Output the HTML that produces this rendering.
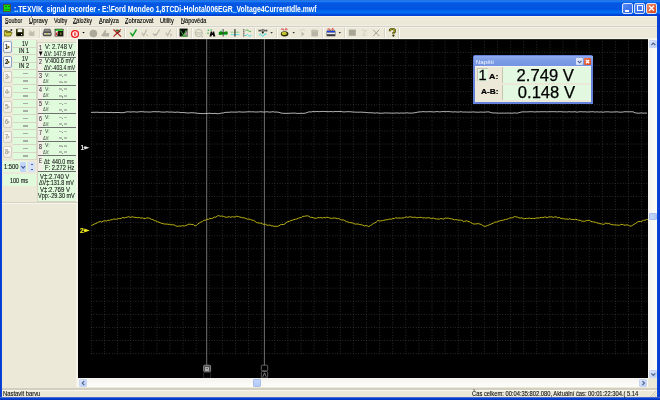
<!DOCTYPE html>
<html><head><meta charset="utf-8"><style>
*{margin:0;padding:0;box-sizing:border-box}
html,body{width:660px;height:400px;overflow:hidden;background:#ECE9D8;font-family:"Liberation Sans",sans-serif;position:relative}
body{will-change:transform}
.a{position:absolute}
.t{position:absolute;white-space:pre;line-height:1;color:#000}
</style></head><body>
<div class="a" style="left:0px;top:0px;width:660px;height:15.6px;background:linear-gradient(#2C6CD8 0,#1A80F6 1.4px,#0658E4 2.8px,#0054E0 9px,#006CF2 11.6px,#0070F4 12.8px,#0048DC 14.4px,#0040D0 15.6px);"></div>
<div class="a" style="left:2px;top:15.6px;width:655px;height:1px;background:#FBF6E4;"></div>
<div class="a" style="left:3.4px;top:4.4px;width:8px;height:8px;background:#12D812;border:1px solid #4A5A30"></div>
<div class="a" style="left:5.4px;top:6.0px;width:1.2px;height:1.2px;background:#0A7A0A;"></div><div class="a" style="left:8.4px;top:6.0px;width:1.2px;height:1.2px;background:#0A7A0A;"></div><div class="a" style="left:4.8px;top:8.6px;width:5.4px;height:1.4px;background:#0C9A0C;"></div>
<div class="t" style="left:14.00px;top:5px;font-size:8.6px;color:#fff;font-weight:bold;transform-origin:0 0;transform:scaleX(0.794);">:.TEXVIK  signal recorder - E:\Ford Mondeo 1,8TCDi-Holota\006EGR_Voltage4CurrentIdle.mwf</div>
<div class="a" style="left:622px;top:3px;width:11px;height:10.6px;background:linear-gradient(135deg,#5A8CF4,#2A64E4);border:1px solid #D8E4F8;border-radius:2px"></div>
<div class="a" style="left:625px;top:10px;width:4px;height:1.5px;background:#fff;"></div>
<div class="a" style="left:634px;top:3px;width:11px;height:10.6px;background:linear-gradient(135deg,#5A8CF4,#2A64E4);border:1px solid #D8E4F8;border-radius:2px"></div>
<div class="a" style="left:636.5px;top:5.4px;width:6px;height:5.6px;background:transparent;border:1px solid #fff;border-top-width:1.5px"></div>
<div class="a" style="left:646px;top:3px;width:10.8px;height:10.6px;background:linear-gradient(135deg,#F08A60,#D8441C);border:1px solid #D8E4F8;border-radius:2px"></div>
<svg class="a" style="left:646px;top:3px" width="11" height="11"><path d="M3 2.8L8 7.8M8 2.8L3 7.8" stroke="#fff" stroke-width="1.4"/></svg>
<div class="a" style="left:0px;top:14px;width:2px;height:386px;background:linear-gradient(90deg,#0838C8,#0A48E0);"></div><div class="a" style="left:657px;top:14px;width:3px;height:386px;background:linear-gradient(90deg,#0A48E0,#0838C8);"></div><div class="a" style="left:0px;top:397px;width:660px;height:1px;background:#4A6AD0;"></div><div class="a" style="left:0px;top:398px;width:660px;height:2px;background:linear-gradient(#0644D8,#0432B8);"></div>
<div class="a" style="left:2px;top:25px;width:655px;height:1px;background:#F0EEE4;"></div>
<div class="a" style="left:2px;top:26px;width:655px;height:1px;background:#D6D3C6;"></div>
<div class="a" style="left:2px;top:27px;width:655px;height:1px;background:#F2F0E8;"></div>
<div class="t" style="left:4.95px;top:18px;font-size:6.6px;color:#000;transform-origin:0 0;transform:scaleX(0.813);-webkit-text-stroke:0.12px #000;">Soubor</div>
<div class="a" style="left:4.95px;top:23.2px;width:3.4px;height:0.7px;background:#333;"></div>
<div class="t" style="left:28.70px;top:18px;font-size:6.6px;color:#000;transform-origin:0 0;transform:scaleX(0.899);-webkit-text-stroke:0.12px #000;">Úpravy</div>
<div class="a" style="left:28.7px;top:23.2px;width:3.4px;height:0.7px;background:#333;"></div>
<div class="t" style="left:53.70px;top:18px;font-size:6.6px;color:#000;transform-origin:0 0;transform:scaleX(0.824);-webkit-text-stroke:0.12px #000;">Volby</div>
<div class="t" style="left:73.30px;top:18px;font-size:6.6px;color:#000;transform-origin:0 0;transform:scaleX(0.831);-webkit-text-stroke:0.12px #000;">Záložky</div>
<div class="a" style="left:73.3px;top:23.2px;width:3.4px;height:0.7px;background:#333;"></div>
<div class="t" style="left:98.60px;top:18px;font-size:6.6px;color:#000;transform-origin:0 0;transform:scaleX(0.851);-webkit-text-stroke:0.12px #000;">Analýza</div>
<div class="a" style="left:98.6px;top:23.2px;width:3.4px;height:0.7px;background:#333;"></div>
<div class="t" style="left:125.00px;top:18px;font-size:6.6px;color:#000;transform-origin:0 0;transform:scaleX(0.863);-webkit-text-stroke:0.12px #000;">Zobrazovat</div>
<div class="a" style="left:125px;top:23.2px;width:3.4px;height:0.7px;background:#333;"></div>
<div class="t" style="left:160.00px;top:18px;font-size:6.6px;color:#000;transform-origin:0 0;transform:scaleX(0.849);-webkit-text-stroke:0.12px #000;">Utility</div>
<div class="t" style="left:180.50px;top:18px;font-size:6.6px;color:#000;transform-origin:0 0;transform:scaleX(0.846);-webkit-text-stroke:0.12px #000;">Nápověda</div>
<div class="a" style="left:180.5px;top:23.2px;width:3.4px;height:0.7px;background:#333;"></div>
<div class="a" style="left:2px;top:38px;width:655px;height:1px;background:#F6F4EC;"></div>
<svg class="a" style="left:0;top:0" width="400" height="40" viewBox="0 0 400 40">
<g stroke-linejoin="round">
<!-- folder -->
<path d="M4.6 30.6h2.6l0.8 0.9h2.8v4.2h-6.2z" fill="#8C8620" stroke="#484610" stroke-width="0.7"/>
<path d="M4.4 35.9L6.3 32.6H12.2L10.3 35.9Z" fill="#CFC83A" stroke="#5A5612" stroke-width="0.6"/>
<path d="M4.8 31.4L6.2 33.2L4.8 35Z" fill="#F2EC40"/>
<circle cx="11.3" cy="30" r="0.9" fill="#222"/>
<!-- floppy -->
<rect x="16" y="28.7" width="7.8" height="7.6" rx="0.8" fill="#343410"/>
<rect x="17.6" y="29.2" width="4.6" height="2.8" fill="#F4F4F0"/>
<rect x="17.4" y="33.2" width="5" height="2.6" fill="#000"/>
<rect x="21" y="34" width="1" height="1.2" fill="#EEE"/>
<!-- disabled -->
<path d="M28.4 33.5l2.5-2.5 1.5 1.2 2-2v5.8h-4.5z" fill="#C2BFB0"/>
<path d="M29 30.4l2 1.2" stroke="#C2BFB0" stroke-width="1"/>
<!-- sep -->
<rect x="39" y="28" width="0.8" height="10" fill="#D2CEBE"/><rect x="39.8" y="28" width="0.8" height="10" fill="#FFF"/>
<!-- printer -->
<path d="M44.5 29.2h5.5l1 2.5h-7.4z" fill="#8A8A8A" stroke="#3E3E3E" stroke-width="0.6"/>
<rect x="42.8" y="31.8" width="8.8" height="4.4" rx="1.5" fill="#505050"/>
<rect x="44" y="33.2" width="6.6" height="1.3" fill="#E8E8D8"/>
<rect x="46.4" y="33.3" width="1.5" height="1" fill="#C8C000"/>
<!-- chart icon -->
<rect x="54.7" y="28.7" width="8.8" height="7.8" rx="0.6" fill="#3C3C3C"/>
<rect x="55.5" y="29.4" width="7.3" height="1.6" fill="#38D838"/>
<path d="M55.5 31L58 31L57 36H55.5Z" fill="#EDEDED"/>
<path d="M55.7 33.5L57.5 31.5L56.8 35.6L55.6 35.6Z" fill="#E02020"/>
<rect x="58.2" y="31.2" width="4.6" height="4.6" fill="#101000"/>
<rect x="59.8" y="32.3" width="1.8" height="2.4" fill="#6A6A20"/>
<!-- sep -->
<rect x="66" y="28" width="0.8" height="10" fill="#D2CEBE"/><rect x="66.8" y="28" width="0.8" height="10" fill="#FFF"/>
<!-- stop red circle -->
<circle cx="75" cy="34" r="3.4" fill="#FFF" stroke="#EE1010" stroke-width="1.3"/>
<rect x="73.9" y="32.3" width="0.8" height="3.4" fill="#E81818"/><rect x="75.4" y="32.3" width="0.8" height="3.4" fill="#E81818"/>
<path d="M82.3 32.1h2.4l-1.2 1.3z" fill="#000"/>
<!-- gray circle -->
<circle cx="93.4" cy="33.5" r="3.8" fill="#ACA99A"/>
<!-- gray icon -->
<path d="M101 35.5l3-3.8 1-2 1.5 1.2-1 2h3.6v3.6h-6z" fill="#B4B1A2"/>
<!-- red X -->
<path d="M114 35.8l3.5-4 2-1.6 1.2 1-2 1.8z" fill="#303020"/>
<ellipse cx="117.2" cy="30.5" rx="1.8" ry="1.1" fill="#2A6A20"/>
<path d="M113.5 29.5L121 36.6M120.8 29.3L113.5 36.6" stroke="#B02020" stroke-width="1.1"/>
<!-- sep -->
<rect x="124.2" y="28" width="0.8" height="10" fill="#D2CEBE"/><rect x="125" y="28" width="0.8" height="10" fill="#FFF"/>
<!-- checks -->
<path d="M130.4 32.6l2.2 3.3 3.9-6.6" stroke="#10A020" stroke-width="1.5" fill="none"/>
<path d="M141.8 32.4l1.8 3.4 3-6.3" stroke="#B8B5A8" stroke-width="1.1" fill="none"/><path d="M146 34.5l2 1.2" stroke="#B8B5A8" stroke-width="0.9"/>
<path d="M153 33.4l1.6 2.2 1.2-1.8M155.8 35.6l3.8-6" stroke="#B8B5A8" stroke-width="1.1" fill="none"/>
<path d="M165.8 32.4l1.8 3.4 3-6.3" stroke="#B8B5A8" stroke-width="1.1" fill="none"/><path d="M170 33.8l2 1.2l-2 1.2" stroke="#B8B5A8" stroke-width="0.9" fill="none"/>
<!-- sep -->
<rect x="176.5" y="28" width="0.8" height="10" fill="#D2CEBE"/><rect x="177.3" y="28" width="0.8" height="10" fill="#FFF"/>
<!-- black square -->
<rect x="179.6" y="28.6" width="8" height="7.9" fill="#0A0A0A"/>
<path d="M187.6 30L182.6 35.8H187.6Z" fill="#A89898"/>
<path d="M180.5 30.5L183.5 35M183.6 35.5L186.2 30" stroke="#30C030" stroke-width="0.9" fill="none"/>
<rect x="181.5" y="35.6" width="6" height="0.9" fill="#40D040"/>
<!-- sep -->
<rect x="191.1" y="28" width="0.8" height="10" fill="#D2CEBE"/><rect x="191.9" y="28" width="0.8" height="10" fill="#FFF"/>
<!-- gray circle lines -->
<circle cx="198.8" cy="33" r="3.6" fill="none" stroke="#BEBBAE" stroke-width="1"/>
<path d="M195.5 32.6h6.6M196 34.2h5.6" stroke="#BEBBAE" stroke-width="0.8"/>
<rect x="201.8" y="36.2" width="1" height="1" fill="#9A978A"/>
<!-- binocular -->
<path d="M209.5 36.4l1.2-5h1.2l0.5 2 0.5-2h1.2l1.2 5h-2l-0.4-1.5h-1l-0.4 1.5z" fill="#0A0A0A"/>
<circle cx="208.3" cy="30.2" r="0.8" fill="#20B040"/><circle cx="211.2" cy="30" r="0.8" fill="#20B040"/><circle cx="208" cy="33.3" r="0.8" fill="#20B040"/>
<!-- green wave -->
<path d="M218.8 32.2l2-1.2l2.5 1.4l2.5-1.2l1.9 0.6v2.4l-2 0.8l-2.5-0.8l-2.5 0.8l-1.9-0.3z" fill="#0A8A0A"/>
<path d="M221 30.4h1.4M224.5 34.8h1.4" stroke="#40E0E0" stroke-width="0.8"/>
<rect x="222.7" y="29" width="0.8" height="7.6" fill="#222"/>
<!-- lines -->
<path d="M230.8 32.2h8.6" stroke="#40B040" stroke-width="0.8" stroke-dasharray="1 0.6"/>
<path d="M230.8 34.6h8.6" stroke="#50E0E8" stroke-width="0.9"/>
<rect x="234.4" y="29" width="1.1" height="7.6" fill="#2A2A2A"/>
<!-- wave2 -->
<path d="M243.8 29.2v7.4" stroke="#1A1A1A" stroke-width="0.9" stroke-dasharray="1.3 0.7"/>
<path d="M245.5 30.6q1.4-1.6 2.8 0t2.8 0.6" stroke="#40A840" stroke-width="0.9" fill="none"/>
<path d="M245 35.5h1.2q1.2-2 2.4 0t2.8-0.4" stroke="#30D8E8" stroke-width="0.9" fill="none"/>
<!-- sep -->
<rect x="254.2" y="28" width="0.8" height="10" fill="#D2CEBE"/><rect x="255" y="28" width="0.8" height="10" fill="#FFF"/>
<!-- HDH -->
<path d="M259 29.5v2.2M259 30.6h2M261 29.5v2.2M262.2 29.6v2h1.3q0.9-1-0-2zM264.8 29.5v2.2M264.8 30.6h2M266.8 29.5v2.2" stroke="#202020" stroke-width="0.7" fill="none"/>
<ellipse cx="262.8" cy="32.8" rx="1.1" ry="0.7" fill="#000"/>
<path d="M259.2 35.2q1.2-2.4 2.4 0t2.4 0t2.4-1" stroke="#20D8E8" stroke-width="1" fill="none"/>
<path d="M270.4 32.3h2.4l-1.2 1.3z" fill="#000"/>
<!-- sep -->
<rect x="276.1" y="28" width="0.8" height="10" fill="#D2CEBE"/><rect x="276.9" y="28" width="0.8" height="10" fill="#FFF"/>
<!-- yellow/red -->
<path d="M281.2 29.8l0.7-1.3l0.7 1.3M283.2 28.6v1.4h1.4M285.6 28.6v1.4h1.2q1-0.7 0-1.4z" stroke="#D03030" stroke-width="0.7" fill="none"/>
<ellipse cx="284.6" cy="33.8" rx="3.8" ry="2.6" fill="#2A2A08"/>
<ellipse cx="284.2" cy="33.4" rx="2.6" ry="1.7" fill="#C8C830"/>
<path d="M292.5 32.3h2.4l-1.2 1.3z" fill="#000"/>
<!-- gray play -->
<path d="M299.6 30.2h2.2M302.5 29.4h1.5M304.6 29.4q1.2 0.5 0 1.2" stroke="#C8C5B8" stroke-width="0.7" fill="none"/>
<path d="M301.5 31.6l3 2.3l-3 2.6z" fill="#BEBBAE"/>
<!-- gray trash -->
<rect x="311.4" y="31.2" width="6.6" height="5.2" fill="#B8B5A6"/>
<rect x="311" y="30.2" width="7.4" height="1" fill="#B8B5A6"/>
<path d="M312 29.5h1.5M314.6 29.2h1.4" stroke="#C8C5B8" stroke-width="0.7"/>
<!-- sep -->
<rect x="322.4" y="28" width="0.8" height="10" fill="#D2CEBE"/><rect x="323.2" y="28" width="0.8" height="10" fill="#FFF"/>
<!-- blue/red -->
<path d="M327.6 29.8l0.7-1.3l0.7 1.3M329.6 28.6v1.4h1.4M332 28.6v1.4h1.2q1-0.7 0-1.4z" stroke="#D03030" stroke-width="0.7" fill="none"/>
<rect x="326.6" y="30.6" width="8.8" height="5.6" rx="0.5" fill="#3A3A3A"/>
<rect x="327" y="31" width="8" height="1.4" fill="#1840E8"/>
<rect x="327" y="32.6" width="8" height="1.6" fill="#E8E8F0"/>
<path d="M338.6 32.3h2.4l-1.2 1.3z" fill="#000"/>
<!-- sep -->
<rect x="344.2" y="28" width="0.8" height="10" fill="#D2CEBE"/><rect x="345" y="28" width="0.8" height="10" fill="#FFF"/>
<rect x="348.8" y="29.6" width="7" height="6.2" fill="#A9A696"/>
<path d="M362.2 35.5l4.6-5.6M362 30.6q2-1.5 3 0.4M363.5 35.6q2 0.2 3-1.5" stroke="#CAC7BA" stroke-width="0.9" fill="none"/>
<path d="M373.2 29.8l6 6.2M379.2 29.8l-6 6.2" stroke="#A4A192" stroke-width="1"/>
<!-- sep -->
<rect x="384.2" y="28" width="0.8" height="10" fill="#D2CEBE"/><rect x="385" y="28" width="0.8" height="10" fill="#FFF"/>
<!-- ? -->
<path d="M389.8 31.2q0-2.3 2.6-2.3t2.6 2q0 1.3-1.6 2v1" stroke="#2A2A00" stroke-width="2" fill="none"/>
<path d="M389.8 31.2q0-2.3 2.6-2.3t2.6 2q0 1.3-1.6 2v1" stroke="#C8C020" stroke-width="1" fill="none"/>
<circle cx="393.4" cy="35.6" r="1.1" fill="#2A2A00"/>
<!-- end -->
<rect x="398.2" y="27.6" width="0.8" height="11" fill="#D2CEBE"/><rect x="399" y="27.6" width="0.8" height="11" fill="#FFF"/>
</g></svg>

<div class="a" style="left:76.2px;top:39px;width:1.8px;height:348px;background:#F6F4EA;"></div>
<div class="a" style="left:2.8px;top:40.5px;width:9.4px;height:12.3px;background:linear-gradient(#FFFFFF,#F0EEE4);border:1px solid #8AA6C8;border-radius:2px"></div>
<div class="t" style="left:5.00px;top:44px;font-size:6.8px;color:#000;font-weight:bold;transform-origin:0 0;transform:scaleX(0.689);">1</div>
<svg class="a" style="left:0;top:40px" width="14" height="14"><path d="M7.5 5.4L10 7.1L7.5 8.8Z" fill="#5A5A08"/></svg>
<div class="a" style="left:13px;top:39.5px;width:23.5px;height:15.2px;background:#D9D5C6;"></div>
<div class="a" style="left:13.4px;top:40.3px;width:22.5px;height:6.4px;background:#E0FBDC;"></div>
<div class="a" style="left:13.4px;top:47.6px;width:22.5px;height:6.0px;background:#E0FBDC;"></div>
<div class="t" style="left:21.75px;top:41px;font-size:6.8px;color:#1A1A1A;transform-origin:0 0;transform:scaleX(0.744);-webkit-text-stroke:0.15px #1A1A1A;">1V</div>
<div class="t" style="left:19.30px;top:48px;font-size:6.8px;color:#1A1A1A;transform-origin:0 0;transform:scaleX(0.801);-webkit-text-stroke:0.15px #1A1A1A;">IN 1</div>
<div class="a" style="left:2.8px;top:55.5px;width:9.4px;height:12.3px;background:linear-gradient(#FFFFFF,#F0EEE4);border:1px solid #8AA6C8;border-radius:2px"></div>
<div class="t" style="left:5.00px;top:59px;font-size:6.8px;color:#000;font-weight:bold;transform-origin:0 0;transform:scaleX(0.848);">2</div>
<svg class="a" style="left:0;top:55px" width="14" height="14"><path d="M7.5 5.4L10 7.1L7.5 8.8Z" fill="#5A5A08"/></svg>
<div class="a" style="left:13px;top:54.5px;width:23.5px;height:15.2px;background:#D9D5C6;"></div>
<div class="a" style="left:13.4px;top:55.3px;width:22.5px;height:6.4px;background:#E0FBDC;"></div>
<div class="a" style="left:13.4px;top:62.6px;width:22.5px;height:6.0px;background:#E0FBDC;"></div>
<div class="t" style="left:21.75px;top:56px;font-size:6.8px;color:#1A1A1A;transform-origin:0 0;transform:scaleX(0.744);-webkit-text-stroke:0.15px #1A1A1A;">1V</div>
<div class="t" style="left:19.30px;top:63px;font-size:6.8px;color:#1A1A1A;transform-origin:0 0;transform:scaleX(0.801);-webkit-text-stroke:0.15px #1A1A1A;">IN 2</div>
<div class="a" style="left:2.8px;top:70.5px;width:9.4px;height:12.3px;background:linear-gradient(#FAF9F4,#EEECE2);border:1px solid #D4D0C0;border-radius:2px"></div>
<div class="t" style="left:4.80px;top:73px;font-size:7px;color:#A29E8A;font-weight:bold;transform-origin:0 0;transform:scaleX(0.798);">3</div>
<svg class="a" style="left:0;top:70px" width="14" height="14"><path d="M7.6 5.4L10 7.1L7.6 8.8Z" fill="#BDB9A6"/></svg>
<div class="a" style="left:13px;top:69.5px;width:23.5px;height:15.2px;background:#D9D5C6;"></div>
<div class="a" style="left:13.4px;top:70.3px;width:22.5px;height:6.4px;background:#E0FBDC;"></div>
<div class="a" style="left:13.4px;top:77.6px;width:22.5px;height:6.0px;background:#E0FBDC;"></div>
<div class="a" style="left:23px;top:73.0px;width:4.6px;height:1.4px;background:#A8ACA6;"></div>
<div class="a" style="left:23px;top:80.2px;width:4.6px;height:1.4px;background:#A8ACA6;"></div>
<div class="a" style="left:2.8px;top:85.5px;width:9.4px;height:12.3px;background:linear-gradient(#FAF9F4,#EEECE2);border:1px solid #D4D0C0;border-radius:2px"></div>
<div class="t" style="left:4.80px;top:88px;font-size:7px;color:#A29E8A;font-weight:bold;transform-origin:0 0;transform:scaleX(0.798);">4</div>
<svg class="a" style="left:0;top:85px" width="14" height="14"><path d="M7.6 5.4L10 7.1L7.6 8.8Z" fill="#BDB9A6"/></svg>
<div class="a" style="left:13px;top:84.5px;width:23.5px;height:15.2px;background:#D9D5C6;"></div>
<div class="a" style="left:13.4px;top:85.3px;width:22.5px;height:6.4px;background:#E0FBDC;"></div>
<div class="a" style="left:13.4px;top:92.6px;width:22.5px;height:6.0px;background:#E0FBDC;"></div>
<div class="a" style="left:23px;top:88.0px;width:4.6px;height:1.4px;background:#A8ACA6;"></div>
<div class="a" style="left:23px;top:95.2px;width:4.6px;height:1.4px;background:#A8ACA6;"></div>
<div class="a" style="left:2.8px;top:100.5px;width:9.4px;height:12.3px;background:linear-gradient(#FAF9F4,#EEECE2);border:1px solid #D4D0C0;border-radius:2px"></div>
<div class="t" style="left:4.80px;top:103px;font-size:7px;color:#A29E8A;font-weight:bold;transform-origin:0 0;transform:scaleX(0.798);">5</div>
<svg class="a" style="left:0;top:100px" width="14" height="14"><path d="M7.6 5.4L10 7.1L7.6 8.8Z" fill="#BDB9A6"/></svg>
<div class="a" style="left:13px;top:99.5px;width:23.5px;height:15.2px;background:#D9D5C6;"></div>
<div class="a" style="left:13.4px;top:100.3px;width:22.5px;height:6.4px;background:#E0FBDC;"></div>
<div class="a" style="left:13.4px;top:107.6px;width:22.5px;height:6.0px;background:#E0FBDC;"></div>
<div class="a" style="left:23px;top:103.0px;width:4.6px;height:1.4px;background:#A8ACA6;"></div>
<div class="a" style="left:23px;top:110.2px;width:4.6px;height:1.4px;background:#A8ACA6;"></div>
<div class="a" style="left:2.8px;top:115.5px;width:9.4px;height:12.3px;background:linear-gradient(#FAF9F4,#EEECE2);border:1px solid #D4D0C0;border-radius:2px"></div>
<div class="t" style="left:4.80px;top:118px;font-size:7px;color:#A29E8A;font-weight:bold;transform-origin:0 0;transform:scaleX(0.798);">6</div>
<svg class="a" style="left:0;top:115px" width="14" height="14"><path d="M7.6 5.4L10 7.1L7.6 8.8Z" fill="#BDB9A6"/></svg>
<div class="a" style="left:13px;top:114.5px;width:23.5px;height:15.2px;background:#D9D5C6;"></div>
<div class="a" style="left:13.4px;top:115.3px;width:22.5px;height:6.4px;background:#E0FBDC;"></div>
<div class="a" style="left:13.4px;top:122.6px;width:22.5px;height:6.0px;background:#E0FBDC;"></div>
<div class="a" style="left:23px;top:118.0px;width:4.6px;height:1.4px;background:#A8ACA6;"></div>
<div class="a" style="left:23px;top:125.2px;width:4.6px;height:1.4px;background:#A8ACA6;"></div>
<div class="a" style="left:2.8px;top:130.5px;width:9.4px;height:12.3px;background:linear-gradient(#FAF9F4,#EEECE2);border:1px solid #D4D0C0;border-radius:2px"></div>
<div class="t" style="left:4.80px;top:133px;font-size:7px;color:#A29E8A;font-weight:bold;transform-origin:0 0;transform:scaleX(0.798);">7</div>
<svg class="a" style="left:0;top:130px" width="14" height="14"><path d="M7.6 5.4L10 7.1L7.6 8.8Z" fill="#BDB9A6"/></svg>
<div class="a" style="left:13px;top:129.5px;width:23.5px;height:15.2px;background:#D9D5C6;"></div>
<div class="a" style="left:13.4px;top:130.3px;width:22.5px;height:6.4px;background:#E0FBDC;"></div>
<div class="a" style="left:13.4px;top:137.6px;width:22.5px;height:6.0px;background:#E0FBDC;"></div>
<div class="a" style="left:23px;top:133.0px;width:4.6px;height:1.4px;background:#A8ACA6;"></div>
<div class="a" style="left:23px;top:140.2px;width:4.6px;height:1.4px;background:#A8ACA6;"></div>
<div class="a" style="left:2.8px;top:145.5px;width:9.4px;height:12.3px;background:linear-gradient(#FAF9F4,#EEECE2);border:1px solid #D4D0C0;border-radius:2px"></div>
<div class="t" style="left:4.80px;top:148px;font-size:7px;color:#A29E8A;font-weight:bold;transform-origin:0 0;transform:scaleX(0.798);">8</div>
<svg class="a" style="left:0;top:145px" width="14" height="14"><path d="M7.6 5.4L10 7.1L7.6 8.8Z" fill="#BDB9A6"/></svg>
<div class="a" style="left:13px;top:144.5px;width:23.5px;height:15.2px;background:#D9D5C6;"></div>
<div class="a" style="left:13.4px;top:145.3px;width:22.5px;height:6.4px;background:#E0FBDC;"></div>
<div class="a" style="left:13.4px;top:152.6px;width:22.5px;height:6.0px;background:#E0FBDC;"></div>
<div class="a" style="left:23px;top:148.0px;width:4.6px;height:1.4px;background:#A8ACA6;"></div>
<div class="a" style="left:23px;top:155.2px;width:4.6px;height:1.4px;background:#A8ACA6;"></div>
<div class="a" style="left:2.7px;top:161.2px;width:24px;height:11px;background:#E0FBDC;"></div>
<div class="t" style="left:4.20px;top:163px;font-size:7px;color:#111;transform-origin:0 0;transform:scaleX(0.827);-webkit-text-stroke:0.12px #111;">1:500</div>
<div class="a" style="left:20px;top:161.8px;width:6.4px;height:10px;background:#C2D4F8;border-radius:1px"></div>
<svg class="a" style="left:20px;top:161.8px" width="7" height="10"><path d="M1.4 4.2L3.2 6.2L5 4.2" stroke="#4A5E9A" stroke-width="1.2" fill="none"/></svg>
<div class="a" style="left:28px;top:161.5px;width:7px;height:5px;background:#D6E2F8;border-radius:1px"></div><div class="a" style="left:28px;top:167px;width:7px;height:5px;background:#D6E2F8;border-radius:1px"></div>
<div class="a" style="left:30.5px;top:163.5px;width:2px;height:1px;background:#4A5E9A;"></div><div class="a" style="left:30.5px;top:169px;width:2px;height:1px;background:#4A5E9A;"></div>
<div class="a" style="left:2.7px;top:174px;width:33.3px;height:12px;background:#E0FBDC;"></div>
<div class="t" style="left:9.70px;top:177px;font-size:7px;color:#111;transform-origin:0 0;transform:scaleX(0.784);-webkit-text-stroke:0.12px #111;">100 ms</div>
<div class="a" style="left:2px;top:201.6px;width:76px;height:1px;background:#D6D2C2;"></div><div class="a" style="left:2px;top:202.6px;width:76px;height:1px;background:#F6F5EE;"></div>
<div class="a" style="left:37.2px;top:41.6px;width:39px;height:160.2px;background:#F2F0E6;border:1px solid #D8D4C6"></div>
<div class="a" style="left:42.8px;top:42.7px;width:33.2px;height:13.9px;background:#E0FBDC;"></div>
<div class="t" style="left:39.40px;top:44px;font-size:7px;color:#2A2A2A;transform-origin:0 0;transform:scaleX(0.746);-webkit-text-stroke:0.1px #2A2A2A;">1</div>
<svg class="a" style="left:0;top:0" width="50" height="60"><path d="M38.9 51.4H42.5L40.7 55.9Z" fill="#000"/></svg>
<div class="t" style="left:44.80px;top:44px;font-size:6.8px;color:#111;transform-origin:0 0;transform:scaleX(0.876);-webkit-text-stroke:0.08px #111;">V: 2.748 V</div>
<div class="t" style="left:43.60px;top:51px;font-size:6.8px;color:#111;transform-origin:0 0;transform:scaleX(0.748);-webkit-text-stroke:0.08px #111;">ΔV: 147.9 mV</div>
<div class="a" style="left:42.8px;top:56.800000000000004px;width:33.2px;height:13.9px;background:#E0FBDC;"></div>
<div class="t" style="left:39.40px;top:58px;font-size:7px;color:#2A2A2A;transform-origin:0 0;transform:scaleX(0.746);-webkit-text-stroke:0.1px #2A2A2A;">2</div>
<div class="t" style="left:44.80px;top:58px;font-size:6.8px;color:#111;transform-origin:0 0;transform:scaleX(0.816);-webkit-text-stroke:0.08px #111;">V:400.6 mV</div>
<div class="t" style="left:43.60px;top:65px;font-size:6.8px;color:#111;transform-origin:0 0;transform:scaleX(0.741);-webkit-text-stroke:0.08px #111;">ΔV:-403.4 mV</div>
<div class="a" style="left:42.8px;top:70.9px;width:33.2px;height:13.9px;background:#E0FBDC;"></div>
<div class="t" style="left:39.40px;top:72px;font-size:7px;color:#2A2A2A;transform-origin:0 0;transform:scaleX(0.746);-webkit-text-stroke:0.1px #2A2A2A;">3</div>
<div class="t" style="left:44.80px;top:72px;font-size:6.0px;color:#333;transform-origin:0 0;transform:scaleX(0.842);">V:</div>
<div class="t" style="left:43.40px;top:78px;font-size:6.0px;color:#333;transform-origin:0 0;transform:scaleX(0.656);">ΔV:</div>
<div class="a" style="left:58.9px;top:74.30000000000001px;width:3.1px;height:1.8px;background:#B4BCB2;"></div><div class="a" style="left:63.6px;top:74.30000000000001px;width:3.2px;height:1.8px;background:#B4BCB2;"></div><div class="a" style="left:62.4px;top:75.70000000000002px;width:0.7px;height:1.2px;background:#8A908A;"></div>
<div class="a" style="left:58.9px;top:80.9px;width:3.1px;height:1.8px;background:#B4BCB2;"></div><div class="a" style="left:63.6px;top:80.9px;width:3.2px;height:1.8px;background:#B4BCB2;"></div><div class="a" style="left:62.4px;top:82.30000000000001px;width:0.7px;height:1.2px;background:#8A908A;"></div>
<div class="a" style="left:42.8px;top:85.0px;width:33.2px;height:13.9px;background:#E0FBDC;"></div>
<div class="t" style="left:39.40px;top:86px;font-size:7px;color:#2A2A2A;transform-origin:0 0;transform:scaleX(0.746);-webkit-text-stroke:0.1px #2A2A2A;">4</div>
<div class="t" style="left:44.80px;top:86px;font-size:6.0px;color:#333;transform-origin:0 0;transform:scaleX(0.842);">V:</div>
<div class="t" style="left:43.40px;top:92px;font-size:6.0px;color:#333;transform-origin:0 0;transform:scaleX(0.656);">ΔV:</div>
<div class="a" style="left:58.9px;top:88.4px;width:3.1px;height:1.8px;background:#B4BCB2;"></div><div class="a" style="left:63.6px;top:88.4px;width:3.2px;height:1.8px;background:#B4BCB2;"></div><div class="a" style="left:62.4px;top:89.80000000000001px;width:0.7px;height:1.2px;background:#8A908A;"></div>
<div class="a" style="left:58.9px;top:95.0px;width:3.1px;height:1.8px;background:#B4BCB2;"></div><div class="a" style="left:63.6px;top:95.0px;width:3.2px;height:1.8px;background:#B4BCB2;"></div><div class="a" style="left:62.4px;top:96.4px;width:0.7px;height:1.2px;background:#8A908A;"></div>
<div class="a" style="left:42.8px;top:99.1px;width:33.2px;height:13.9px;background:#E0FBDC;"></div>
<div class="t" style="left:39.40px;top:100px;font-size:7px;color:#2A2A2A;transform-origin:0 0;transform:scaleX(0.746);-webkit-text-stroke:0.1px #2A2A2A;">5</div>
<div class="t" style="left:44.80px;top:100px;font-size:6.0px;color:#333;transform-origin:0 0;transform:scaleX(0.842);">V:</div>
<div class="t" style="left:43.40px;top:106px;font-size:6.0px;color:#333;transform-origin:0 0;transform:scaleX(0.656);">ΔV:</div>
<div class="a" style="left:58.9px;top:102.5px;width:3.1px;height:1.8px;background:#B4BCB2;"></div><div class="a" style="left:63.6px;top:102.5px;width:3.2px;height:1.8px;background:#B4BCB2;"></div><div class="a" style="left:62.4px;top:103.9px;width:0.7px;height:1.2px;background:#8A908A;"></div>
<div class="a" style="left:58.9px;top:109.1px;width:3.1px;height:1.8px;background:#B4BCB2;"></div><div class="a" style="left:63.6px;top:109.1px;width:3.2px;height:1.8px;background:#B4BCB2;"></div><div class="a" style="left:62.4px;top:110.5px;width:0.7px;height:1.2px;background:#8A908A;"></div>
<div class="a" style="left:42.8px;top:113.2px;width:33.2px;height:13.9px;background:#E0FBDC;"></div>
<div class="t" style="left:39.40px;top:115px;font-size:7px;color:#2A2A2A;transform-origin:0 0;transform:scaleX(0.746);-webkit-text-stroke:0.1px #2A2A2A;">6</div>
<div class="t" style="left:44.80px;top:114px;font-size:6.0px;color:#333;transform-origin:0 0;transform:scaleX(0.842);">V:</div>
<div class="t" style="left:43.40px;top:121px;font-size:6.0px;color:#333;transform-origin:0 0;transform:scaleX(0.656);">ΔV:</div>
<div class="a" style="left:58.9px;top:116.60000000000001px;width:3.1px;height:1.8px;background:#B4BCB2;"></div><div class="a" style="left:63.6px;top:116.60000000000001px;width:3.2px;height:1.8px;background:#B4BCB2;"></div><div class="a" style="left:62.4px;top:118.00000000000001px;width:0.7px;height:1.2px;background:#8A908A;"></div>
<div class="a" style="left:58.9px;top:123.2px;width:3.1px;height:1.8px;background:#B4BCB2;"></div><div class="a" style="left:63.6px;top:123.2px;width:3.2px;height:1.8px;background:#B4BCB2;"></div><div class="a" style="left:62.4px;top:124.60000000000001px;width:0.7px;height:1.2px;background:#8A908A;"></div>
<div class="a" style="left:42.8px;top:127.3px;width:33.2px;height:13.9px;background:#E0FBDC;"></div>
<div class="t" style="left:39.40px;top:129px;font-size:7px;color:#2A2A2A;transform-origin:0 0;transform:scaleX(0.746);-webkit-text-stroke:0.1px #2A2A2A;">7</div>
<div class="t" style="left:44.80px;top:128px;font-size:6.0px;color:#333;transform-origin:0 0;transform:scaleX(0.842);">V:</div>
<div class="t" style="left:43.40px;top:135px;font-size:6.0px;color:#333;transform-origin:0 0;transform:scaleX(0.656);">ΔV:</div>
<div class="a" style="left:58.9px;top:130.7px;width:3.1px;height:1.8px;background:#B4BCB2;"></div><div class="a" style="left:63.6px;top:130.7px;width:3.2px;height:1.8px;background:#B4BCB2;"></div><div class="a" style="left:62.4px;top:132.1px;width:0.7px;height:1.2px;background:#8A908A;"></div>
<div class="a" style="left:58.9px;top:137.3px;width:3.1px;height:1.8px;background:#B4BCB2;"></div><div class="a" style="left:63.6px;top:137.3px;width:3.2px;height:1.8px;background:#B4BCB2;"></div><div class="a" style="left:62.4px;top:138.70000000000002px;width:0.7px;height:1.2px;background:#8A908A;"></div>
<div class="a" style="left:42.8px;top:141.4px;width:33.2px;height:13.9px;background:#E0FBDC;"></div>
<div class="t" style="left:39.40px;top:143px;font-size:7px;color:#2A2A2A;transform-origin:0 0;transform:scaleX(0.746);-webkit-text-stroke:0.1px #2A2A2A;">8</div>
<div class="t" style="left:44.80px;top:142px;font-size:6.0px;color:#333;transform-origin:0 0;transform:scaleX(0.842);">V:</div>
<div class="t" style="left:43.40px;top:149px;font-size:6.0px;color:#333;transform-origin:0 0;transform:scaleX(0.656);">ΔV:</div>
<div class="a" style="left:58.9px;top:144.8px;width:3.1px;height:1.8px;background:#B4BCB2;"></div><div class="a" style="left:63.6px;top:144.8px;width:3.2px;height:1.8px;background:#B4BCB2;"></div><div class="a" style="left:62.4px;top:146.20000000000002px;width:0.7px;height:1.2px;background:#8A908A;"></div>
<div class="a" style="left:58.9px;top:151.4px;width:3.1px;height:1.8px;background:#B4BCB2;"></div><div class="a" style="left:63.6px;top:151.4px;width:3.2px;height:1.8px;background:#B4BCB2;"></div><div class="a" style="left:62.4px;top:152.8px;width:0.7px;height:1.2px;background:#8A908A;"></div>
<div class="a" style="left:42.8px;top:155.5px;width:33.2px;height:15.3px;background:#E0FBDC;"></div>
<div class="t" style="left:39.20px;top:157px;font-size:7px;color:#222;transform-origin:0 0;transform:scaleX(0.623);-webkit-text-stroke:0.12px #222;">E</div>
<div class="t" style="left:43.80px;top:159px;font-size:6.8px;color:#111;transform-origin:0 0;transform:scaleX(0.783);-webkit-text-stroke:0.1px #111;">Δt: 440.0 ms</div>
<div class="t" style="left:45.00px;top:165px;font-size:6.8px;color:#111;transform-origin:0 0;transform:scaleX(0.836);-webkit-text-stroke:0.1px #111;">F: 2.272 Hz</div>
<div class="a" style="left:38px;top:171.1px;width:37.6px;height:1px;background:#6E6E6E;"></div>
<div class="a" style="left:38px;top:56.7px;width:37.6px;height:1px;background:#6E6E6E;"></div>
<div class="a" style="left:38px;top:70.80000000000001px;width:37.6px;height:1px;background:#6E6E6E;"></div>
<div class="a" style="left:38px;top:84.9px;width:37.6px;height:1px;background:#6E6E6E;"></div>
<div class="a" style="left:38px;top:99.0px;width:37.6px;height:1px;background:#6E6E6E;"></div>
<div class="a" style="left:38px;top:113.1px;width:37.6px;height:1px;background:#6E6E6E;"></div>
<div class="a" style="left:38px;top:127.2px;width:37.6px;height:1px;background:#6E6E6E;"></div>
<div class="a" style="left:38px;top:141.3px;width:37.6px;height:1px;background:#6E6E6E;"></div>
<div class="a" style="left:38px;top:155.4px;width:37.6px;height:1px;background:#6E6E6E;"></div>
<div class="a" style="left:38px;top:172.1px;width:38px;height:29.1px;background:#E0FBDC;"></div>
<div class="t" style="left:39.70px;top:174px;font-size:6.8px;color:#111;transform-origin:0 0;transform:scaleX(0.870);-webkit-text-stroke:0.1px #111;">V‡:2.740 V</div>
<div class="t" style="left:38.70px;top:180px;font-size:6.8px;color:#111;transform-origin:0 0;transform:scaleX(0.793);-webkit-text-stroke:0.1px #111;">ΔV‡:131.8 mV</div>
<div class="t" style="left:39.70px;top:187px;font-size:6.8px;color:#111;transform-origin:0 0;transform:scaleX(0.891);-webkit-text-stroke:0.1px #111;">V‡:2.769 V</div>
<div class="t" style="left:38.20px;top:193px;font-size:6.8px;color:#111;transform-origin:0 0;transform:scaleX(0.811);-webkit-text-stroke:0.1px #111;">Vpp:-29.30 mV</div>
<div class="a" style="left:78px;top:39px;width:570px;height:339px;background:#000;"></div>
<div class="a" style="left:78px;top:39px;width:570px;height:1px;background:#2A2A28;"></div>
<svg class="a" style="left:78px;top:39px" width="570" height="339" viewBox="0 0 570 339">
<path d="M13.40 2.50V315.20M26.50 2.50V315.20M39.60 2.50V315.20M52.70 2.50V315.20M65.80 2.50V315.20M78.90 2.50V315.20M92.00 2.50V315.20M105.10 2.50V315.20M118.20 2.50V315.20M131.30 2.50V315.20M144.40 2.50V315.20M157.50 2.50V315.20M170.60 2.50V315.20M183.70 2.50V315.20M196.80 2.50V315.20M209.90 2.50V315.20M223.00 2.50V315.20M236.10 2.50V315.20M249.20 2.50V315.20M262.30 2.50V315.20M275.40 2.50V315.20M288.50 2.50V315.20M301.60 2.50V315.20M314.70 2.50V315.20M327.80 2.50V315.20M340.90 2.50V315.20M354.00 2.50V315.20M367.10 2.50V315.20M380.20 2.50V315.20M393.30 2.50V315.20M406.40 2.50V315.20M419.50 2.50V315.20M432.60 2.50V315.20M445.70 2.50V315.20M458.80 2.50V315.20M471.90 2.50V315.20M485.00 2.50V315.20M498.10 2.50V315.20M511.20 2.50V315.20M524.30 2.50V315.20M537.40 2.50V315.20M550.50 2.50V315.20M563.60 2.50V315.20" stroke="#4a4a4a" stroke-width="0.75" stroke-dasharray="0.75 1.87" fill="none"/>
<path d="M13.00 13.35H570.00M13.00 26.45H570.00M13.00 39.55H570.00M13.00 52.65H570.00M13.00 65.75H570.00M13.00 78.85H570.00M13.00 91.95H570.00M13.00 105.05H570.00M13.00 118.15H570.00M13.00 131.25H570.00M13.00 144.35H570.00M13.00 157.45H570.00M13.00 170.55H570.00M13.00 183.65H570.00M13.00 196.75H570.00M13.00 209.85H570.00M13.00 222.95H570.00M13.00 236.05H570.00M13.00 249.15H570.00M13.00 262.25H570.00M13.00 275.35H570.00M13.00 288.45H570.00M13.00 301.55H570.00M13.00 314.65H570.00" stroke="#4a4a4a" stroke-width="0.75" stroke-dasharray="0.75 1.87" fill="none"/>
<line x1="128.7" y1="0" x2="128.7" y2="326" stroke="#8C8C8C" stroke-width="0.8"/>
<line x1="186.4" y1="0" x2="186.4" y2="326" stroke="#8C8C8C" stroke-width="0.8"/>
<rect x="125.6" y="326.2" width="7" height="6.6" rx="1" fill="#505050" stroke="#A8A8A8" stroke-width="0.7"/>
<text x="127.0" y="332.0" font-size="6" font-weight="bold" fill="#D8D8D8" font-family="Liberation Sans">B</text>
<rect x="125.6" y="333.2" width="7" height="6" rx="1" fill="none" stroke="#3A3A3A" stroke-width="0.7"/>
<rect x="183.3" y="326.2" width="6.4" height="5.6" rx="1" fill="none" stroke="#8A8A8A" stroke-width="0.7"/>
<rect x="183.3" y="332.4" width="6.4" height="6.6" rx="1.5" fill="none" stroke="#8A8A8A" stroke-width="0.7"/>
<path d="M184.8 337.8L186.5 333.8L188.2 337.8" stroke="#A0A0A0" stroke-width="0.8" fill="none"/>
<text x="2.4" y="111.4" font-size="6.4" font-weight="bold" fill="#E8E8E8" font-family="Liberation Sans">1</text>
<path d="M6.4 106.9L11.4 108.7L6.4 110.5Z" fill="#E8E8E8"/><rect x="5.6" y="108.2" width="2" height="1" fill="#E8E8E8"/>
<text x="1.9" y="194.3" font-size="6.6" font-weight="bold" fill="#F0E820" stroke="#F0E820" stroke-width="0.2" font-family="Liberation Sans">2</text>
<path d="M6.2 189.6L11.8 191.5L6.2 193.4Z" fill="#F0E820"/><rect x="5.6" y="191" width="2" height="1" fill="#F0E820"/>
<polyline points="13.0,73.4 15.0,73.3 17.0,73.3 19.0,73.2 21.0,73.4 23.0,73.4 25.0,73.3 27.0,73.4 29.0,73.4 31.0,73.6 33.0,73.3 35.0,73.7 37.0,73.5 39.0,73.5 41.0,73.5 43.0,73.7 45.0,73.7 47.0,73.3 49.0,72.8 51.0,72.9 53.0,73.0 55.0,72.8 57.0,72.9 59.0,73.1 61.0,72.8 63.0,72.7 65.0,72.7 67.0,73.0 69.0,72.9 71.0,73.1 73.0,73.0 75.0,72.7 77.0,72.7 79.0,72.8 81.0,72.7 83.0,73.0 85.0,73.1 87.0,73.1 89.0,72.8 91.0,73.1 93.0,73.0 95.0,73.1 97.0,73.4 99.0,73.1 101.0,73.2 103.0,73.7 105.0,73.5 107.0,73.7 109.0,73.9 111.0,74.0 113.0,73.7 115.0,73.8 117.0,73.9 119.0,74.3 121.0,74.4 123.0,74.5 125.0,74.7 127.0,74.4 129.0,74.5 131.0,74.3 133.0,74.4 135.0,74.6 137.0,74.3 139.0,74.7 141.0,74.7 143.0,74.1 145.0,74.1 147.0,73.4 149.0,73.3 151.0,73.3 153.0,73.0 155.0,73.1 157.0,73.1 159.0,73.1 161.0,72.8 163.0,73.0 165.0,73.1 167.0,73.0 169.0,72.9 171.0,72.7 173.0,72.9 175.0,72.8 177.0,73.0 179.0,73.0 181.0,72.9 183.0,72.7 185.0,73.0 187.0,73.0 189.0,72.7 191.0,73.1 193.0,73.0 195.0,72.7 197.0,73.1 199.0,73.0 201.0,73.4 203.0,74.0 205.0,74.3 207.0,74.3 209.0,74.4 211.0,74.3 213.0,74.2 215.0,74.1 217.0,74.1 219.0,74.4 221.0,74.4 223.0,74.3 225.0,74.4 227.0,74.2 229.0,73.6 231.0,72.8 233.0,73.0 235.0,72.5 237.0,72.7 239.0,72.5 241.0,72.7 243.0,72.5 245.0,72.4 247.0,72.5 249.0,72.6 251.0,72.7 253.0,72.5 255.0,72.8 257.0,72.5 259.0,72.6 261.0,72.5 263.0,72.5 265.0,72.9 267.0,72.9 269.0,72.7 271.0,72.7 273.0,72.8 275.0,73.0 277.0,73.1 279.0,73.2 281.0,73.2 283.0,73.1 285.0,73.3 287.0,73.3 289.0,73.6 291.0,73.8 293.0,73.7 295.0,73.9 297.0,74.1 299.0,73.8 301.0,74.2 303.0,74.2 305.0,74.2 307.0,73.9 309.0,74.0 311.0,74.0 313.0,74.1 315.0,74.2 317.0,74.1 319.0,73.9 321.0,74.2 323.0,74.0 325.0,74.1 327.0,74.1 329.0,73.8 331.0,74.1 333.0,74.1 335.0,74.0 337.0,73.7 339.0,73.3 341.0,72.9 343.0,72.9 345.0,72.6 347.0,72.8 349.0,72.8 351.0,72.7 353.0,72.7 355.0,72.9 357.0,72.9 359.0,72.5 361.0,72.9 363.0,72.8 365.0,72.5 367.0,72.7 369.0,72.6 371.0,72.6 373.0,72.8 375.0,73.0 377.0,72.8 379.0,73.0 381.0,73.0 383.0,72.7 385.0,73.1 387.0,73.0 389.0,73.1 391.0,73.1 393.0,73.1 395.0,72.9 397.0,73.1 399.0,73.2 401.0,73.2 403.0,73.0 405.0,73.2 407.0,73.1 409.0,72.9 411.0,72.9 413.0,73.6 415.0,74.0 417.0,73.9 419.0,74.1 421.0,74.2 423.0,74.1 425.0,74.1 427.0,74.2 429.0,74.0 431.0,74.1 433.0,74.2 435.0,74.1 437.0,73.9 439.0,74.2 441.0,73.7 443.0,73.1 445.0,72.8 447.0,72.9 449.0,72.9 451.0,72.8 453.0,72.7 455.0,72.8 457.0,73.0 459.0,72.7 461.0,72.9 463.0,72.7 465.0,72.8 467.0,72.7 469.0,72.9 471.0,72.7 473.0,72.7 475.0,72.7 477.0,72.7 479.0,72.9 481.0,72.7 483.0,72.7 485.0,72.9 487.0,72.9 489.0,73.0 491.0,72.7 493.0,72.9 495.0,72.9 497.0,72.7 499.0,73.2 501.0,72.8 503.0,72.7 505.0,72.9 507.0,72.8 509.0,73.0 511.0,72.9 513.0,72.8 515.0,72.7 517.0,73.1 519.0,72.8 521.0,73.1 523.0,72.9 525.0,73.2 527.0,72.9 529.0,72.8 531.0,72.9 533.0,73.1 535.0,73.0 537.0,72.9 539.0,72.8 541.0,73.1 543.0,73.2 545.0,73.0 547.0,72.7 549.0,72.8 551.0,72.8 553.0,72.8 555.0,72.8 557.0,73.8 559.0,74.1 561.0,74.2 563.0,73.9 565.0,74.2 567.0,74.0 569.0,74.2" stroke="#B8B8B8" stroke-width="0.95" fill="none"/>
<polyline points="13.3,186.4 14.8,186.0 16.3,185.0 17.8,184.5 19.3,183.8 20.8,182.9 22.3,182.5 23.8,183.0 25.3,182.0 26.8,181.7 28.3,182.1 29.8,181.3 31.3,181.4 32.8,180.8 34.3,180.7 35.8,180.0 37.3,180.2 38.8,180.2 40.3,179.6 41.8,179.6 43.3,179.3 44.8,178.5 46.3,178.9 47.8,178.5 49.3,178.1 50.8,177.7 52.3,178.4 53.8,177.9 55.3,178.0 56.8,178.4 58.3,178.4 59.8,178.8 61.3,178.5 62.8,179.1 64.3,178.8 65.8,179.5 67.3,179.5 68.8,178.9 70.3,179.0 71.8,179.2 73.3,180.3 74.8,180.5 76.3,181.5 77.8,181.9 79.3,182.7 80.8,183.2 82.3,183.7 83.8,184.5 85.3,184.7 86.8,185.1 88.3,185.0 89.8,185.3 91.3,185.3 92.8,185.7 94.3,185.8 95.8,185.7 97.3,186.7 98.8,187.2 100.3,187.3 101.8,187.0 103.3,187.1 104.8,186.6 106.3,187.1 107.8,186.5 109.3,185.9 110.8,185.2 112.3,185.3 113.8,185.5 115.3,185.5 116.8,187.0 118.3,186.5 119.8,185.1 121.3,184.0 122.8,183.2 124.3,182.5 125.8,181.2 127.3,181.3 128.8,180.2 130.3,180.4 131.8,179.5 133.3,179.6 134.8,179.2 136.3,178.2 137.8,178.2 139.3,177.0 140.8,176.6 142.3,177.3 143.8,177.0 145.3,177.4 146.8,177.9 148.3,178.3 149.8,178.0 151.3,177.7 152.8,178.4 154.3,177.6 155.8,178.1 157.3,177.8 158.8,177.2 160.3,177.6 161.8,178.0 163.3,178.4 164.8,178.7 166.3,178.9 167.8,179.4 169.3,180.1 170.8,180.1 172.3,180.4 173.8,181.1 175.3,181.3 176.8,182.1 178.3,183.5 179.8,183.7 181.3,184.2 182.8,184.0 184.3,184.8 185.8,185.4 187.3,185.2 188.8,186.1 190.3,186.3 191.8,186.0 193.3,186.8 194.8,186.9 196.3,187.4 197.8,187.3 199.3,187.3 200.8,186.9 202.3,185.8 203.8,185.4 205.3,185.6 206.8,185.1 208.3,183.4 209.8,182.7 211.3,182.3 212.8,181.6 214.3,181.2 215.8,180.7 217.3,180.2 218.8,180.0 220.3,179.2 221.8,178.7 223.3,178.6 224.8,177.3 226.3,177.3 227.8,177.0 229.3,176.8 230.8,177.2 232.3,178.4 233.8,178.3 235.3,178.8 236.8,179.2 238.3,179.3 239.8,178.6 241.3,178.7 242.8,178.6 244.3,179.0 245.8,178.5 247.3,178.8 248.8,178.2 250.3,178.5 251.8,179.0 253.3,179.4 254.8,179.1 256.3,179.1 257.8,179.1 259.3,179.7 260.8,179.5 262.3,180.5 263.8,181.0 265.3,180.9 266.8,181.5 268.3,182.5 269.8,182.9 271.3,183.6 272.8,183.6 274.3,183.9 275.8,184.5 277.3,185.2 278.8,184.9 280.3,185.2 281.8,185.5 283.3,185.8 284.8,186.1 286.3,187.0 287.8,186.6 289.3,186.8 290.8,187.6 292.3,186.6 293.8,185.8 295.3,184.4 296.8,184.0 298.3,183.0 299.8,181.6 301.3,181.9 302.8,181.9 304.3,181.6 305.8,181.3 307.3,180.9 308.8,180.8 310.3,180.5 311.8,180.0 313.3,180.2 314.8,179.5 316.3,179.7 317.8,178.6 319.3,179.2 320.8,178.9 322.3,179.1 323.8,179.0 325.3,178.9 326.8,178.5 328.3,177.8 329.8,178.5 331.3,177.8 332.8,177.9 334.3,178.3 335.8,178.3 337.3,178.2 338.8,178.8 340.3,178.6 341.8,178.4 343.3,178.3 344.8,179.0 346.3,178.7 347.8,179.1 349.3,178.8 350.8,178.7 352.3,179.2 353.8,179.5 355.3,179.0 356.8,179.7 358.3,180.0 359.8,180.0 361.3,180.1 362.8,179.4 364.3,179.9 365.8,180.0 367.3,179.1 368.8,179.2 370.3,179.1 371.8,179.6 373.3,179.8 374.8,180.2 376.3,180.9 377.8,180.5 379.3,180.9 380.8,181.1 382.3,181.2 383.8,181.3 385.3,182.4 386.8,182.4 388.3,181.7 389.8,182.3 391.3,182.7 392.8,183.6 394.3,184.5 395.8,185.0 397.3,185.0 398.8,184.8 400.3,184.6 401.8,185.1 403.3,185.5 404.8,186.6 406.3,187.4 407.8,187.2 409.3,186.6 410.8,186.1 412.3,185.4 413.8,184.8 415.3,184.1 416.8,183.1 418.3,183.1 419.8,182.6 421.3,182.0 422.8,181.6 424.3,181.3 425.8,181.1 427.3,180.4 428.8,180.3 430.3,179.7 431.8,179.0 433.3,178.9 434.8,178.7 436.3,177.6 437.8,177.8 439.3,178.1 440.8,178.8 442.3,179.1 443.8,178.8 445.3,179.6 446.8,179.7 448.3,179.3 449.8,179.4 451.3,179.0 452.8,179.6 454.3,179.3 455.8,179.5 457.3,179.3 458.8,179.0 460.3,179.0 461.8,178.8 463.3,178.3 464.8,178.7 466.3,178.0 467.8,178.1 469.3,178.7 470.8,177.9 472.3,177.9 473.8,177.8 475.3,178.5 476.8,177.8 478.3,177.9 479.8,178.9 481.3,178.4 482.8,179.4 484.3,179.4 485.8,179.8 487.3,180.1 488.8,180.0 490.3,180.3 491.8,179.7 493.3,180.5 494.8,180.4 496.3,180.7 497.8,180.2 499.3,180.9 500.8,181.2 502.3,181.3 503.8,182.1 505.3,182.2 506.8,182.3 508.3,181.6 509.8,181.4 511.3,181.4 512.8,182.2 514.3,182.8 515.8,182.9 517.3,183.3 518.8,183.8 520.3,184.2 521.8,184.7 523.3,184.8 524.8,185.3 526.3,185.1 527.8,184.0 529.3,184.7 530.8,184.4 532.3,185.2 533.8,185.6 535.3,185.8 536.8,185.9 538.3,186.0 539.8,186.1 541.3,186.3 542.8,185.5 544.3,185.4 545.8,186.0 547.3,186.2 548.8,185.8 550.3,186.2 551.8,187.0 553.3,187.0 554.8,186.2 556.3,185.1 557.8,184.4 559.3,183.1 560.8,182.4 562.3,182.5 563.8,182.3 565.3,181.3 566.8,181.3 568.3,180.6 569.8,180.6" stroke="#BEB410" stroke-width="1" fill="none"/>
</svg>
<div class="a" style="left:648px;top:39px;width:9px;height:339px;background:linear-gradient(90deg,#F4F3EE,#FDFDFA);"></div>
<div class="a" style="left:78px;top:378px;width:570px;height:9.4px;background:linear-gradient(#F4F3EE,#FDFDFA);"></div>
<div class="a" style="left:648.6px;top:39.6px;width:8.6px;height:8.4px;background:linear-gradient(135deg,#DCE6FC,#B8CCF6);border:0.5px solid #C8D6F4;border-radius:1px"></div><svg class="a" style="left:648.6px;top:39.6px" width="8.6" height="8.4"><path d="M2.3 5L4.3 3L6.3 5" stroke="#4D6185" stroke-width="1.1" fill="none"/></svg>
<div class="a" style="left:648.6px;top:369.8px;width:8.6px;height:8.4px;background:linear-gradient(135deg,#DCE6FC,#B8CCF6);border:0.5px solid #C8D6F4;border-radius:1px"></div><svg class="a" style="left:648.6px;top:369.8px" width="8.6" height="8.4"><path d="M2.3 3.4L4.3 5.4L6.3 3.4" stroke="#4D6185" stroke-width="1.1" fill="none"/></svg>
<div class="a" style="left:78.8px;top:379.2px;width:8.6px;height:8.2px;background:linear-gradient(135deg,#DCE6FC,#B8CCF6);border:0.5px solid #C8D6F4;border-radius:1px"></div><svg class="a" style="left:78.8px;top:379.2px" width="8.6" height="8.2"><path d="M5.2 2.2L3.2 4.1L5.2 6" stroke="#4D6185" stroke-width="1.1" fill="none"/></svg>
<div class="a" style="left:638.8px;top:379.2px;width:8.6px;height:8.2px;background:linear-gradient(135deg,#DCE6FC,#B8CCF6);border:0.5px solid #C8D6F4;border-radius:1px"></div><svg class="a" style="left:638.8px;top:379.2px" width="8.6" height="8.2"><path d="M3.4 2.2L5.4 4.1L3.4 6" stroke="#4D6185" stroke-width="1.1" fill="none"/></svg>
<div class="a" style="left:252.5px;top:379.4px;width:8.6px;height:7.8px;background:linear-gradient(#C4D6FA,#B2C8F4);border-radius:1px;border:0.5px solid #A8BEEC"></div>
<div class="a" style="left:648.6px;top:212.8px;width:8.6px;height:7.2px;background:linear-gradient(90deg,#C4D6FA,#B2C8F4);border-radius:1px;border:0.5px solid #A8BEEC"></div>
<div class="a" style="left:648px;top:378px;width:9px;height:9.4px;background:#ECE9D8;"></div>
<div class="a" style="left:2px;top:387.5px;width:655px;height:2.2px;background:#D2CFC0;"></div><div class="a" style="left:2px;top:389.7px;width:655px;height:0.8px;background:#F8F6EE;"></div>
<div class="t" style="left:2.70px;top:391px;font-size:6.5px;color:#111;transform-origin:0 0;transform:scaleX(0.898);-webkit-text-stroke:0.1px #111;">Nastavit barvu</div>
<div class="t" style="left:472.10px;top:391px;font-size:6.5px;color:#111;transform-origin:0 0;transform:scaleX(0.890);-webkit-text-stroke:0.1px #111;">Čas celkem: 00:04:35:802.080, Aktuální čas: 00:01:22:304.( 5.14</div>
<svg class="a" style="left:648px;top:389px" width="9" height="8"><path d="M8 2L2 8M8 4.5L4.5 8M8 7L7 8" stroke="#C4C0B0" stroke-width="0.8"/></svg>
<div class="a" style="left:473.3px;top:55.3px;width:120.2px;height:48.8px;background:#6482DC;border-radius:2px 2px 0 0"></div>
<div class="a" style="left:473.8px;top:55.7px;width:119.2px;height:10.2px;background:linear-gradient(#90ACF2,#7C9CE6 40%,#7494E2)"></div>
<div class="t" style="left:475.8px;top:58.6px;font-size:6.2px;color:#F4F6FF">Napětí</div>
<div class="a" style="left:575.8px;top:58px;width:7.2px;height:7.2px;background:linear-gradient(135deg,#E8EEFA,#C4D0F0);border-radius:1px"></div>
<svg class="a" style="left:575.8px;top:58px" width="8" height="8"><path d="M1.8 2.8L3.6 4.8L5.4 2.8" stroke="#4A5E9A" stroke-width="1.1" fill="none"/></svg>
<div class="a" style="left:583.8px;top:57.8px;width:7.2px;height:7.3px;background:linear-gradient(135deg,#F07850,#D84418);border-radius:1.2px"></div>
<svg class="a" style="left:583.8px;top:57.8px" width="8" height="8"><path d="M2 2L5.2 5.3M5.2 2L2 5.3" stroke="#fff" stroke-width="1.3"/></svg>
<div class="a" style="left:475.3px;top:65.9px;width:116.2px;height:35.7px;background:#ECE9D8;border-top:0.6px solid #F8F6EE"></div>
<div class="a" style="left:476.6px;top:68px;width:11px;height:13px;background:#E3F8E0;border-top:1px solid #CAC6B6;border-left:1px solid #CAC6B6"></div>
<div class="t" style="left:478.4px;top:67.6px;font-size:14.6px;color:#000;-webkit-text-stroke:0.3px #000">1</div>
<div class="t" style="left:488.8px;top:72.6px;font-size:7.4px;font-weight:bold;color:#000;-webkit-text-stroke:0.2px #000;transform-origin:0 0;transform:scaleX(1.2)">A:</div>
<div class="t" style="left:480.6px;top:87.6px;font-size:7.4px;font-weight:bold;color:#000;-webkit-text-stroke:0.2px #000;transform-origin:0 0;transform:scaleX(1.12)">A-B:</div>
<div class="a" style="left:501.6px;top:66.7px;width:89.8px;height:16.1px;background:#E3F8E0;border-left:0.8px solid #C8C4B0"></div>
<div class="a" style="left:501.6px;top:84.6px;width:89.8px;height:15.8px;background:#E3F8E0;border-left:0.8px solid #C8C4B0"></div>
<div class="t" style="left:516.6px;top:67.6px;font-size:16.6px;color:#000;-webkit-text-stroke:0.25px #000">2.749 V</div>
<div class="t" style="left:517.8px;top:85.4px;font-size:16.6px;color:#000;-webkit-text-stroke:0.25px #000">0.148 V</div>

</body></html>
